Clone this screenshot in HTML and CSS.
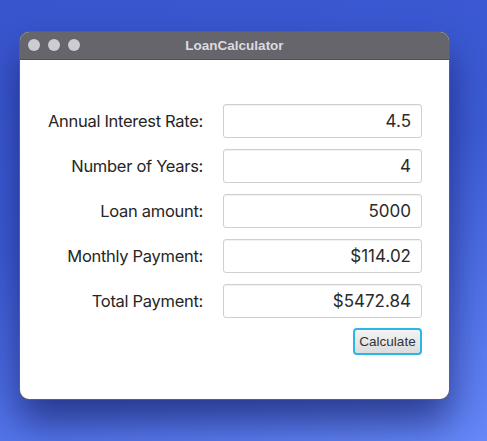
FILE: index.html
```html
<!DOCTYPE html>
<html>
<head>
<meta charset="utf-8">
<link rel="stylesheet" href="styles.css">
</head>
<body>
<div class="window">
  <div class="titlebar">
    <div class="lights"><span class="dot"></span><span class="dot"></span><span class="dot"></span></div>
    <div class="title">LoanCalculator</div>
  </div>
  <div class="content">
    <div class="form">
      <label class="label">Annual Interest Rate:</label><div class="field">4.5</div>
      <label class="label">Number of Years:</label><div class="field">4</div>
      <label class="label">Loan amount:</label><div class="field">5000</div>
      <label class="label">Monthly Payment:</label><div class="field">$114.02</div>
      <label class="label">Total Payment:</label><div class="field">$5472.84</div>
    </div>
    <div class="actions"><button class="btn">Calculate</button></div>
  </div>
</div>
</body>
</html>
```
FILE: styles.css
```css
html, body { margin: 0; height: 100%; }
body {
  width: 487px; height: 441px; overflow: hidden;
  background: linear-gradient(165deg, #3955ce 0%, #3d5cd6 45%, #5677ec 80%, #6688f8 100%);
  padding: 31px 0 0 19px; box-sizing: border-box;
  font-family: Inter, "Noto Sans", sans-serif;
}
.window {
  width: 431px; height: 369px; box-sizing: border-box;
  background: #fff; border-radius: 10px;
  border: 1px solid rgba(20,25,60,0.7);
  box-shadow: 0 22px 38px rgba(15,25,90,0.65);
  overflow: hidden; display: flex; flex-direction: column;
}
.titlebar {
  height: 27px; background: #66656c; position: relative;
  display: flex; align-items: center; justify-content: center;
  border-bottom: 1px solid #4f4e55;
}
.lights { position: absolute; left: 8px; top: 7px; display: flex; gap: 8px; }
.dot { width: 12px; height: 12px; border-radius: 50%; background: #cdccd2; }
.title {
  color: #dcdbe0; font: bold 13.5px "Liberation Sans", Arial, sans-serif;
}
.content { padding: 44px 27px 0 0; display: flex; flex-direction: column; }
.form {
  display: grid; grid-template-columns: 183px 199px; column-gap: 20px; row-gap: 11px;
  align-items: center;
}
.label { text-align: right; font-size: 16.5px; color: #262626; letter-spacing: -0.3px; }
.field {
  height: 34px; box-sizing: border-box; border: 1px solid #cfcfcf; border-radius: 3px;
  box-shadow: inset 0 1px 1px rgba(0,0,0,0.06);
  text-align: right; padding: 0 10px; line-height: 32px;
  font-size: 17px; color: #2a2a2a;
}
.actions { display: flex; justify-content: flex-end; margin-top: 10px; }
.btn {
  width: 69px; height: 27px; box-sizing: border-box; padding: 0;
  border: 2px solid #29b6e8; border-radius: 4px;
  background: linear-gradient(#f4f4f4, #dcdcdc);
  font: 13.5px "Liberation Sans", Arial, sans-serif; color: #333;
}
```
